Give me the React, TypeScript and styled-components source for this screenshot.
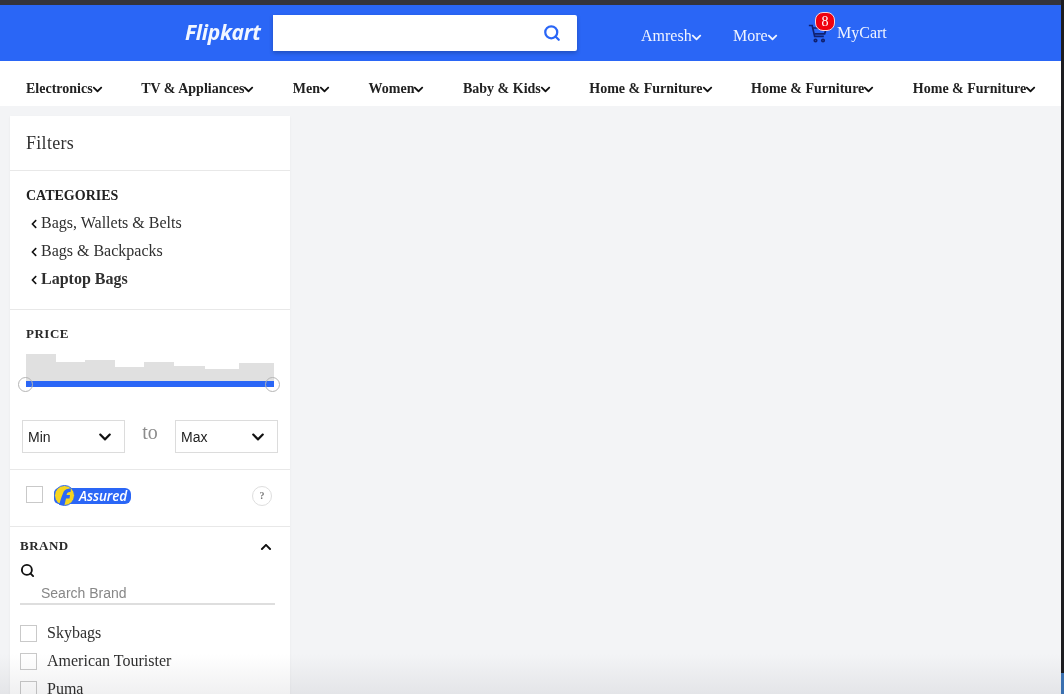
import * as React from 'react'
import styled, { createGlobalStyle } from 'styled-components'
import { FaChevronDown, FaChevronUp, FaChevronLeft } from 'react-icons/fa'
import { Search } from 'lucide-react'

const Colors = {
  blue: '#2a66f6',
  text: '#212121',
  line: '#e8e8e8',
  page: '#f3f4f6',
}

const GlobalStyle = createGlobalStyle`
  html, body {
    margin: 0;
    height: 100%;
    overflow: hidden;
    background: ${Colors.page};
    font-family: "Liberation Serif", "Times New Roman", serif;
    color: ${Colors.text};
  }
`

const Page = styled.div`
  position: relative;
  width: 1064px;
  height: 694px;
  overflow: hidden;
  box-sizing: border-box;
  padding-right: 3px;
  background: ${Colors.page};
`

const TopStrip = styled.div`
  height: 5px;
  background: #34343c;
`

const Header = styled.header`
  display: flex;
  align-items: flex-start;
  height: 56px;
  padding-left: 185px;
  background: ${Colors.blue};
`

const Logo = styled.div`
  width: 88px;
  margin-top: 14px;
  font: italic 700 21px/26px "Open Sans", sans-serif;
  letter-spacing: -0.3px;
  color: #f2f6ff;
`

const SearchBox = styled.div`
  display: flex;
  align-items: center;
  justify-content: flex-end;
  box-sizing: border-box;
  width: 304px;
  height: 36px;
  margin-top: 10px;
  padding-right: 16px;
  background: #fff;
  border-radius: 0 2px 2px 0;
  box-shadow: 0 2px 4px rgba(0, 0, 0, 0.23);
  color: ${Colors.blue};
`

const UserLink = styled.div<{ $width: number }>`
  display: flex;
  align-items: center;
  width: ${p => p.$width}px;
  margin-top: 22px;
  font-size: 16px;
  line-height: 18px;
  color: #f0f4ff;

  > svg {
    font-size: 11px;
    margin: 2px 0 0 -1px;
  }
`

const UserLinks = styled.div`
  display: flex;
  margin-left: 64px;
`

const Cart = styled.div`
  position: relative;
  display: flex;
  align-items: flex-start;
  margin-top: 18px;
  margin-left: -17px;
`

const Badge = styled.span`
  position: absolute;
  left: 7px;
  top: -11px;
  width: 20px;
  height: 19px;
  box-sizing: border-box;
  border: 1px solid #f5d7dc;
  border-radius: 8px;
  background: #f0000f;
  color: #fff;
  font-size: 14px;
  line-height: 17px;
  text-align: center;
`

const CartLabel = styled.span`
  margin: 1px 0 0 9px;
  font-size: 16px;
  line-height: 18px;
  color: #f0f4ff;
`

const CategoryBar = styled.nav`
  display: flex;
  align-items: center;
  gap: 38.5px;
  height: 45px;
  padding-left: 26px;
  background: #fff;
  white-space: nowrap;
`

const CategoryItem = styled.div`
  display: flex;
  align-items: center;
  font-size: 14px;
  font-weight: 700;
  margin-top: 11px;
  color: ${Colors.text};

  > svg {
    font-size: 11px;
    margin-left: -1px;
    color: #111;
  }
`

const Sidebar = styled.aside`
  width: 280px;
  margin: 10px 0 0 10px;
  background: #fff;
  box-shadow: 0 1px 2px rgba(0, 0, 0, 0.06);
`

const Section = styled.section<{ $height: number }>`
  box-sizing: border-box;
  height: ${p => p.$height}px;
  border-bottom: 1px solid ${Colors.line};
`

const FilterTitle = styled.div`
  padding: 17px 0 0 16px;
  font-size: 18px;
  line-height: 20px;
  letter-spacing: 0.3px;
  color: #333;
`

const CategoryList = styled.div`
  padding: 17px 0 0 16px;
`

const SectionHeading = styled.div`
  margin-bottom: 5px;
  font-size: 14px;
  font-weight: 700;
  line-height: 16px;
`

const CategoryLink = styled.div<{ $active?: boolean }>`
  display: flex;
  align-items: center;
  gap: 2px;
  height: 28px;
  padding-left: 3px;
  font-size: 16px;
  font-weight: ${p => (p.$active ? 700 : 400)};
  color: #2f2f2f;

  > svg {
    font-size: 10px;
    margin-top: 2px;
    color: #111;
  }
`

const PriceBody = styled.div`
  padding: 16px 0 0 16px;
`

const SmallHeading = styled.div`
  font-size: 13px;
  font-weight: 700;
  line-height: 16px;
  letter-spacing: 0.5px;
  color: #2a2a2a;
`

const Histogram = styled.div`
  display: flex;
  align-items: flex-end;
  width: 248px;
  height: 27px;
  margin-top: 12px;
`

const Bar = styled.div<{ $width: number; $height: number }>`
  width: ${p => p.$width}px;
  height: ${p => p.$height}px;
  background: #e0e0e0;
`

const Track = styled.div`
  position: relative;
  width: 248px;
  height: 6px;
  background: ${Colors.blue};
`

const Handle = styled.span<{ $side: 'left' | 'right' }>`
  position: absolute;
  top: -4px;
  ${p => p.$side}: ${p => (p.$side === 'left' ? -8 : -6)}px;
  width: 15px;
  height: 15px;
  box-sizing: border-box;
  border: 1px solid #b5b5b5;
  border-radius: 50%;
`

const RangeRow = styled.div`
  display: flex;
  align-items: flex-start;
  margin: 33px 0 0 -4px;
`

const RangeSelect = styled.div`
  display: flex;
  align-items: center;
  justify-content: space-between;
  box-sizing: border-box;
  width: 103px;
  height: 33px;
  padding: 0 12px 0 5px;
  border: 1px solid #dcdcdc;
  font: 14px "Liberation Sans", Arial, sans-serif;
  color: #222;

  > svg {
    font-size: 14px;
    color: #111;
  }
`

const RangeTo = styled.span`
  width: 50px;
  text-align: center;
  font-size: 20px;
  line-height: 24px;
  color: #8c8c8c;
`

const AssuredRow = styled.div`
  display: flex;
  align-items: center;
  height: 52px;
  padding: 0 18px 0 16px;

  > span:first-child {
    margin-top: -3px;
  }
`

const Checkbox = styled.span`
  display: block;
  flex: none;
  box-sizing: border-box;
  width: 17px;
  height: 17px;
  border: 1px solid #c9c9c9;
  background: #fff;
`

const AssuredBadge = styled.div`
  position: relative;
  display: flex;
  align-items: center;
  justify-content: flex-end;
  box-sizing: border-box;
  width: 77px;
  height: 16px;
  margin-left: 11px;
  padding-right: 4px;
  border-radius: 5px 6px 6px 5px;
  background: ${Colors.blue};
  color: #fff;
  font: italic 600 13.5px/16px "Open Sans", sans-serif;
  letter-spacing: -0.1px;
`

const AssuredMark = styled.svg`
  position: absolute;
  left: 0;
  top: -3px;
`

const HelpIcon = styled.span`
  display: block;
  box-sizing: border-box;
  width: 20px;
  height: 20px;
  margin-left: auto;
  border: 1px solid #dedede;
  border-radius: 50%;
  font-size: 10px;
  font-weight: 700;
  line-height: 18px;
  text-align: center;
  color: #777;
`

const BrandBody = styled.div`
  padding: 11px 15px 0 10px;
`

const BrandHeader = styled.div`
  display: flex;
  align-items: center;
  justify-content: space-between;
  padding-right: 3px;

  > svg {
    font-size: 12px;
    margin-top: 2px;
    color: #111;
  }
`

const BrandSearch = styled.div`
  margin-top: 9px;
  border-bottom: 2px solid #dedede;

  > svg {
    display: block;
    color: #111;
  }
`

const SearchHint = styled.div`
  padding: 7px 0 2px 21px;
  font: 14px/16px "Liberation Sans", Arial, sans-serif;
  color: #878787;
`

const BrandList = styled.div`
  margin-top: 14px;
`

const BrandRow = styled.label`
  display: flex;
  align-items: center;
  gap: 10px;
  height: 28px;
  font-size: 16px;
  color: #2f2f2f;
`

const BottomFade = styled.div`
  position: absolute;
  left: 0;
  right: 0;
  bottom: 0;
  height: 40px;
  background: linear-gradient(#fff, #f0f0f1);
  mix-blend-mode: multiply;
  pointer-events: none;
`

const EdgeLine = styled.div`
  position: absolute;
  top: 0;
  right: 0;
  bottom: 0;
  width: 3px;
  background: linear-gradient(#1c1c20 0, #1c1c20 673px, #3a70b0 673px);
`

const menu = ['Electronics', 'TV & Appliances', 'Men', 'Women', 'Baby & Kids', 'Home & Furniture', 'Home & Furniture', 'Home & Furniture']
const bars = [[30, 27], [29, 19], [30, 21], [29, 14], [30, 19], [31, 15], [34, 12], [35, 18]]
const brands = ['Skybags', 'American Tourister', 'Puma']

const App = () => (
  <Page>
    <GlobalStyle />
    <TopStrip />
    <Header>
      <Logo>Flipkart</Logo>
      <SearchBox><Search size={18} strokeWidth={3} /></SearchBox>
      <UserLinks>
        <UserLink $width={92}>Amresh<FaChevronDown /></UserLink>
        <UserLink $width={92}>More<FaChevronDown /></UserLink>
      </UserLinks>
      <Cart>
        <svg width="20" height="20" viewBox="0 0 24 24" fill="none" stroke="#10206e" strokeWidth="2">
          <path d="M1 3h4l3 13h11" />
          <path d="M6 6h16l-2 7H8" />
          <circle cx="9" cy="21" r="1.5" />
          <circle cx="18" cy="21" r="1.5" />
        </svg>
        <Badge>8</Badge>
        <CartLabel>MyCart</CartLabel>
      </Cart>
    </Header>
    <CategoryBar>
      {menu.map((name, i) => (
        <CategoryItem key={i}>{name}<FaChevronDown /></CategoryItem>
      ))}
    </CategoryBar>
    <Sidebar>
      <Section $height={55}>
        <FilterTitle>Filters</FilterTitle>
      </Section>
      <Section $height={139}>
        <CategoryList>
          <SectionHeading>CATEGORIES</SectionHeading>
          <CategoryLink><FaChevronLeft />Bags, Wallets &amp; Belts</CategoryLink>
          <CategoryLink><FaChevronLeft />Bags &amp; Backpacks</CategoryLink>
          <CategoryLink $active><FaChevronLeft />Laptop Bags</CategoryLink>
        </CategoryList>
      </Section>
      <Section $height={160}>
        <PriceBody>
          <SmallHeading>PRICE</SmallHeading>
          <Histogram>
            {bars.map(([w, h], i) => <Bar key={i} $width={w} $height={h} />)}
          </Histogram>
          <Track>
            <Handle $side="left" />
            <Handle $side="right" />
          </Track>
          <RangeRow>
            <RangeSelect>Min<FaChevronDown /></RangeSelect>
            <RangeTo>to</RangeTo>
            <RangeSelect>Max<FaChevronDown /></RangeSelect>
          </RangeRow>
        </PriceBody>
      </Section>
      <Section $height={57}>
        <AssuredRow>
          <Checkbox />
          <AssuredBadge>
            <AssuredMark width="21" height="21" viewBox="0 0 21 21">
              <circle cx="10.5" cy="10.5" r="10" fill="#f6d51f" stroke="#2a66f6" />
              <path d="M5 20 Q8 10 10 6 Q12 3 17 3.5 L16.5 7 Q13.5 6.5 13 8.5 L12.5 10 L16 10 L15.5 13.5 L12 13.5 L10.5 20 Z" fill="#2a66f6" />
            </AssuredMark>
            Assured
          </AssuredBadge>
          <HelpIcon>?</HelpIcon>
        </AssuredRow>
      </Section>
      <BrandBody>
        <BrandHeader>
          <SmallHeading>BRAND</SmallHeading>
          <FaChevronUp />
        </BrandHeader>
        <BrandSearch>
          <Search size={15} strokeWidth={3} />
          <SearchHint>Search Brand</SearchHint>
        </BrandSearch>
        <BrandList>
          {brands.map(name => (
            <BrandRow key={name}><Checkbox />{name}</BrandRow>
          ))}
        </BrandList>
      </BrandBody>
    </Sidebar>
    <BottomFade />
    <EdgeLine />
  </Page>
)

export default App
